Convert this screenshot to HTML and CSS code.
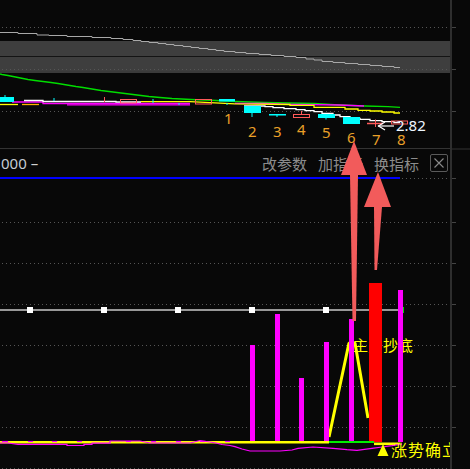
FILE: index.html
```html
<!DOCTYPE html>
<html lang="zh">
<head>
  <meta charset="UTF-8">
  <title>K线 指标</title>
  <link rel="stylesheet" href="styles.css">
</head>
<body>
<div class="screen">
  <div class="main">
    <!-- upper k-line panel -->
    <svg class="chart" width="450" height="148" viewBox="0 0 450 148">
      <rect x="0" y="41" width="450" height="30" fill="#3e3e3e"/>
      <line x1="0" y1="56.5" x2="450" y2="56.5" stroke="#141414"/>
      <line x1="0" y1="72" x2="450" y2="72" stroke="#3a3a3a" stroke-width="2"/>
      <g class="dots">
        <line x1="2" y1="27.5" x2="450" y2="27.5"/>
        <line x1="2" y1="69.5" x2="450" y2="69.5"/>
        <line x1="2" y1="111.5" x2="450" y2="111.5"/>
      </g>
      <polyline fill="none" stroke="#a8a8a8" stroke-width="1" points="0,32.5 18,32.5 18,33.5 37,33.5 37,35 49,35 49,35.5 67,35.5 67,36.5 92,36.5 92,37.5 111,37.5 111,38.5 123,38.5 123,39.5 133,39.5 133,40.5 141,40.5 141,41.5 149,41.5 149,42.5 158,42.5 158,43.5 166,43.5 166,44.5 174,44.5 174,45.5 183,45.5 183,46.5 191,46.5 191,47.5 199,47.5 199,48.5 208,48.5 208,49.5 216,49.5 216,50.5 224,50.5 224,51.5 235,51.5 235,52.5 246,52.5 246,53.5 259,53.5 259,54.5 271,54.5 271,55.5 284,55.5 284,56.5 296,56.5 296,57.5 306,57.5 306,59 314,59 314,60 322,60 322,61.5 333,61.5 333,62.5 345,62.5 345,63.5 358,63.5 358,64.5 370,64.5 370,65.5 382,65.5 382,66.5 394,66.5 394,67.5 400,67.5"/>
      <polyline fill="none" stroke="#00dd00" stroke-width="1.3" points="0,74 2,74.5 8,75.5 13,76.5 18,77.5 23,78.5 28,79.5 35,80.5 43,81.5 51,82.5 58,83.5 64,84.5 70,85.5 76,86.5 83,87.5 89,88.5 95,89.5 101,90.5 109,91.5 117,92.5 125,93.5 133,94.5 141,95.5 149,96.5 160,97.5 172,98.5 191,99.5 216,100.5 235,101.5 265,102.5 314,103.5 339,105 365,106 388,106.7 400,107.3"/>

      <!-- averages -->
      <g fill="none" stroke-width="1.3">
        <polyline stroke="#ff00ff" points="12,102 43,102 43,103.5 190,103.5"/>
        <polyline stroke="#ff00ff" points="67,104.8 190,104.8"/>
        <polyline stroke="#ff00ff" points="235,103.3 265,103.5 290,104.3 339,105 364,106"/>
        <polyline stroke="#ffffff" points="24,100.5 43,100.5 43,101.5 116,101.5 116,102 141,102"/>
        <polyline stroke="#ffff00" points="0,104.5 18,104.5"/>
        <polyline stroke="#ffb000" points="22,104.5 39,104.5"/>
        <polyline stroke="#ffff00" points="141,101.7 190,101.7 235,103.8 290,104.5 290,105.3 314,105.3 314,107.3 345,107.3 345,109 358,109 358,110.3 370,110.3 370,111 382,111 382,112 394,112 394,113 400,113"/>
        <polyline stroke="#ffffff" points="244,106 265,106 265,106.7 273,106.7 273,107.7 284,107.7 284,108.7 296,108.7 296,109.7 305,109.7 305,110.7 314,110.7 314,111.7 322,111.7 322,113.3 333,113.3 333,115 340,115 340,116.7 350,116.7 350,118.3 360,118.3 360,119.3 370,119.3 370,120.7 382,120.7 382,121.7 394,121.7 394,122.5 400,122.5"/>
      </g>

      <!-- candles -->
      <g class="up" fill="#00ffff">
        <rect x="0" y="97" width="14" height="5"/>
        <rect x="4.5" y="95" width="1" height="2"/>
        <rect x="53.5" y="98" width="1" height="3"/>
        <rect x="152.5" y="99" width="1" height="4"/>
        <rect x="178.5" y="103" width="1" height="2"/>
        <rect x="219" y="99" width="16" height="2.5"/>
        <rect x="226.5" y="103" width="1" height="2"/>
        <rect x="244" y="106" width="17" height="7"/>
        <rect x="251.5" y="113" width="1" height="4"/>
        <rect x="269" y="114" width="17" height="1.5"/>
        <rect x="276.5" y="114" width="1" height="3"/>
        <rect x="318" y="114" width="17" height="4"/>
        <rect x="325.5" y="118" width="1" height="1.5"/>
        <rect x="343" y="117" width="17" height="7"/>
      </g>
      <g fill="none" stroke="#ff5a5a" stroke-width="1">
        <line x1="104.5" y1="97" x2="104.5" y2="102"/>
        <rect x="120.5" y="99.5" width="16" height="3.5"/>
        <rect x="195.5" y="99.5" width="16" height="4.5"/>
        <rect x="293.5" y="114.5" width="16" height="3"/>
        <line x1="301.5" y1="111" x2="301.5" y2="114.5"/>
        <line x1="367" y1="123.5" x2="383" y2="123.5" stroke-width="1.5"/>
        <line x1="375.5" y1="119.5" x2="375.5" y2="127"/>
        <rect x="391.5" y="121" width="16" height="3"/>
      </g>

      <g class="num">
        <text x="224" y="124">1</text>
        <text x="248" y="137">2</text>
        <text x="273" y="137">3</text>
        <text x="297" y="135">4</text>
        <text x="322" y="138">5</text>
        <text x="347" y="143">6</text>
        <text x="372" y="145">7</text>
        <text x="397" y="145">8</text>
      </g>
      <g fill="none" stroke="#ffffff" stroke-width="1.2">
        <line x1="378" y1="126" x2="394" y2="126"/>
        <polyline points="385,122 378.5,126 385,130"/>
      </g>
      <text class="price" x="396" y="131">2.82</text>
    </svg>

    <header class="bar">
      <span class="scale">000 <span class="dash">–</span></span>
      <nav class="tools">
        <span class="tool">改参数</span>
        <span class="tool">加指标</span>
        <span class="tool">换指标</span>
        <span class="close">
          <svg width="10" height="10" viewBox="0 0 10 10"><path d="M0.5 0.5 L9.5 9.5 M9.5 0.5 L0.5 9.5" stroke="#8a8a8a" stroke-width="1.1"/></svg>
        </span>
      </nav>
    </header>

    <!-- lower indicator panel -->
    <svg class="chart" width="450" height="292" viewBox="0 0 450 292">
      <line x1="0" y1="1" x2="400" y2="1" stroke="#0000ff" stroke-width="2"/>
      <g class="dots">
        <line x1="402" y1="1.5" x2="450" y2="1.5"/>
        <line x1="2" y1="45.5" x2="450" y2="45.5"/>
        <line x1="2" y1="86.5" x2="450" y2="86.5"/>
        <line x1="2" y1="127.5" x2="450" y2="127.5"/>
        <line x1="2" y1="168.5" x2="450" y2="168.5"/>
        <line x1="2" y1="209.5" x2="450" y2="209.5"/>
        <line x1="2" y1="250.5" x2="450" y2="250.5"/>
        <line x1="2" y1="291.5" x2="450" y2="291.5"/>
      </g>
      <line x1="0" y1="133" x2="400" y2="133" stroke="#c8c8c8" stroke-width="1.5"/>
      <g fill="#ffffff">
        <rect x="27" y="130" width="6" height="6"/>
        <rect x="101" y="130" width="6" height="6"/>
        <rect x="175" y="130" width="6" height="6"/>
        <rect x="249" y="130" width="6" height="6"/>
        <rect x="323" y="130" width="6" height="6"/>
      </g>
      <rect x="398" y="130" width="6" height="6" fill="#00dd00"/>

      <text class="sign" x="353" y="174">主力抄底</text>
      <polyline fill="none" stroke="#ffff00" stroke-width="3" stroke-linejoin="bevel" points="329,260 349,166 355,166 368,241"/>

      <g fill="#ff00ff">
        <rect x="250" y="168" width="5" height="97"/>
        <rect x="275" y="137" width="5" height="128"/>
        <rect x="299" y="201" width="5" height="64"/>
        <rect x="324" y="165" width="5" height="100"/>
        <rect x="349" y="142" width="5" height="123"/>
        <rect x="398" y="113" width="5" height="152"/>
      </g>
      <rect x="369" y="106" width="13" height="159" fill="#ff0000"/>

      <line x1="0" y1="265.3" x2="329" y2="265.3" stroke="#ffff00" stroke-width="2.6"/>
      <line x1="329" y1="265" x2="374" y2="265" stroke="#00ee00" stroke-width="2"/>
      <line x1="374" y1="266.8" x2="400" y2="266.8" stroke="#ffff00" stroke-width="2.6"/>
      <g stroke="#ff00ff" stroke-width="1.2">
        <line x1="2" y1="264.5" x2="8" y2="264.5"/>
        <line x1="28" y1="264.5" x2="33" y2="264.5"/>
        <line x1="52" y1="264.5" x2="57" y2="264.5"/>
        <line x1="77" y1="264.5" x2="82" y2="264.5"/>
        <line x1="126" y1="264.5" x2="131" y2="264.5"/>
        <line x1="151" y1="264.5" x2="156" y2="264.5"/>
        <line x1="176" y1="264.5" x2="181" y2="264.5"/>
        <line x1="200" y1="264.5" x2="205" y2="264.5"/>
        <line x1="225" y1="264.5" x2="230" y2="264.5"/>
      </g>
      <polyline fill="none" stroke="#ff00ff" stroke-width="1.2" points="0,266 8,266 18,267.3 67,267.3 67,268.5 84,268.5 84,267.3 92,267.3 92,266.2 110,266.2 110,264 140,264 150,266 190,266 200,263.5 210,265 216,266 222,267.5 230,268.5 235,269.7 242,272 250,274 280,274 292,273 298,271.3 313,270 333,271.3 347,272.7 357,273.3 372,271.3 382,270 392,268.7 402,267"/>

      <polygon points="377.5,279 383,267 388.5,279" fill="#ffff00"/>
      <text class="sign big" x="391" y="279">涨势确立</text>
    </svg>

    <!-- drawn arrows over both panels -->
    <svg class="overlay" width="450" height="469" viewBox="0 0 450 469">
      <g fill="#f25b5b">
        <polygon points="354,141 341,175 367,175"/>
        <polygon points="350,175 358,175 356,321 352.5,321"/>
        <polygon points="378,172 364,207 391,207"/>
        <polygon points="374,207 382,207 377,270 374.5,270"/>
      </g>
    </svg>
  </div>

  <aside class="strip">
    <svg width="18" height="469" viewBox="0 0 18 469">
      <line x1="0" y1="149" x2="18" y2="149" stroke="#333"/>
      <g stroke="#444">
        <line x1="0" y1="27.5" x2="4" y2="27.5"/>
        <line x1="0" y1="69.5" x2="4" y2="69.5"/>
        <line x1="0" y1="111.5" x2="4" y2="111.5"/>
        <line x1="0" y1="178.5" x2="4" y2="178.5"/>
        <line x1="0" y1="222.5" x2="4" y2="222.5"/>
        <line x1="0" y1="263.5" x2="4" y2="263.5"/>
        <line x1="0" y1="304.5" x2="4" y2="304.5"/>
        <line x1="0" y1="345.5" x2="4" y2="345.5"/>
        <line x1="0" y1="386.5" x2="4" y2="386.5"/>
        <line x1="0" y1="427.5" x2="4" y2="427.5"/>
      </g>
    </svg>
  </aside>
</div>
</body>
</html>
```

FILE: styles.css
```css
/* dark market-terminal look */
body { margin: 0; background: #080808; font-family: "Noto Sans", "Noto Sans CJK SC", sans-serif; }
.screen { position: relative; display: flex; width: 470px; height: 469px; overflow: hidden; background: #080808; }
.main { width: 450px; display: flex; flex-direction: column; }
.strip { width: 18px; border-left: 2px solid #2e2e2e; }
.strip svg { display: block; }
.chart { display: block; }
.overlay { position: absolute; left: 0; top: 0; pointer-events: none; }

.dots line { stroke: #555; stroke-width: 1; stroke-dasharray: 1 3; }

.num text { font-family: "Noto Sans", sans-serif; font-size: 15px; fill: #eaa028; }
.price { font-family: "Noto Sans", sans-serif; font-size: 15px; fill: #eef6ff; }
.sign { font-family: "Noto Sans CJK SC", sans-serif; font-size: 15px; fill: #ffff00; }
.sign.big { font-size: 16px; letter-spacing: 1px; }

.bar { height: 28px; border-top: 1px solid #333; display: flex; align-items: center; justify-content: space-between; padding: 0 2px 0 1px; }
.scale { font-size: 15px; color: #c4ccd4; }
.dash { color: #d0d0d0; }
.tools { display: flex; align-items: center; gap: 11px; }
.tool { font-family: "Noto Sans CJK SC", sans-serif; font-size: 15px; color: #8c8c8c; line-height: 1; }
.close { width: 16px; height: 16px; border: 1px solid #5a5a5a; border-radius: 2px; display: flex; align-items: center; justify-content: center; }
.close svg { display: block; }
```
